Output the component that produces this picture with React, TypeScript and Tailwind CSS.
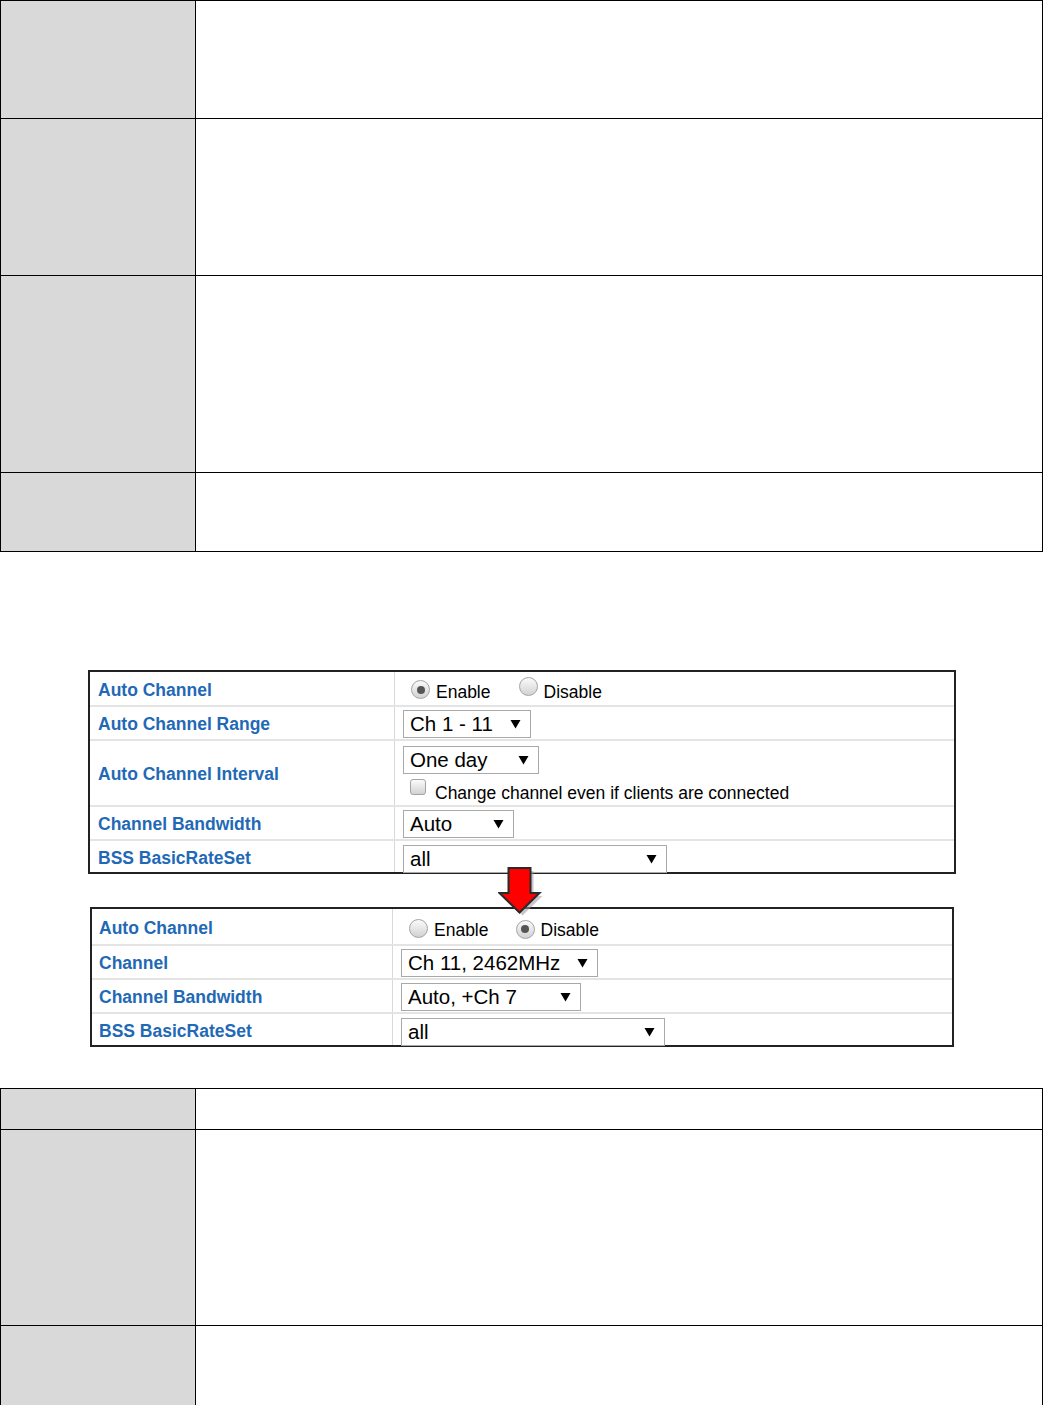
import React from "react";

function Caret() {
  return (
    <svg width="11" height="10" viewBox="0 0 11 10" className="shrink-0">
      <polygon points="0.5,1 10.5,1 5.5,9.5" fill="#000" />
    </svg>
  );
}

function Select({ text, w }: { text: string; w: string }) {
  return (
    <div
      className={`${w} flex h-[28px] items-center justify-between border border-[#a9a9a9] bg-white pl-[6px] pr-[9px] text-[20.5px] leading-none text-black`}
    >
      <span className="pt-[1px]">{text}</span>
      <Caret />
    </div>
  );
}

function Radio({ checked }: { checked?: boolean }) {
  return (
    <span className="inline-flex h-[19px] w-[19px] shrink-0 items-center justify-center rounded-full border border-[#a3a3a3] bg-linear-to-b from-[#fbfbfb] to-[#d2d2d2]">
      {checked && <span className="h-[8px] w-[8px] rounded-full bg-[#555555]" />}
    </span>
  );
}

function Checkbox() {
  return (
    <span className="inline-block h-[16px] w-[16px] shrink-0 rounded-[3px] border border-[#a3a3a3] bg-linear-to-b from-[#fbfbfb] to-[#d2d2d2]" />
  );
}

function PRow({
  label,
  h,
  labelW,
  labelPl,
  last,
  children,
}: {
  label: string;
  h: string;
  labelW: string;
  labelPl: string;
  last?: boolean;
  children: React.ReactNode;
}) {
  return (
    <div className={`flex ${h} ${last ? "" : "border-b-2 border-[#e4e4e4]"}`}>
      <div
        className={`${labelW} ${labelPl} flex shrink-0 items-center border-r border-[#d9d9d9] pt-[3px] text-[17.5px] font-bold text-[#1f69b6]`}
      >
        {label}
      </div>
      <div className="flex flex-1 flex-col justify-center pl-[8px] pt-[2px]">{children}</div>
    </div>
  );
}

function DocRow({ h, last }: { h: string; last?: boolean }) {
  return (
    <div className={`flex ${h} ${last ? "" : "border-b border-black"}`}>
      <div className="w-[195px] shrink-0 border-r border-black bg-[#d9d9d9]" />
      <div className="flex-1 bg-white" />
    </div>
  );
}

export default function App() {
  return (
    <div className="w-[1043px] bg-white font-['Liberation_Sans',Arial,sans-serif] text-black">
      {/* top doc table */}
      <div className="border border-black">
        <DocRow h="h-[118px]" />
        <DocRow h="h-[157px]" />
        <DocRow h="h-[197px]" />
        <DocRow h="h-[78px]" last />
      </div>

      {/* screenshots */}
      <div className="relative mt-[118px]">
        <div className="ml-[88px] w-[868px] border-2 border-[#222222] bg-white">
          <PRow label="Auto Channel" h="h-[35px]" labelW="w-[305px]" labelPl="pl-[8px]">
            <div className="flex items-center pl-[8px]">
              <Radio checked />
              <span className="ml-[6px] mt-[6px] text-[17.5px] leading-none">Enable</span>
              <span className="ml-[28px]">
                <Radio />
              </span>
              <span className="ml-[6px] mt-[6px] text-[17.5px] leading-none">Disable</span>
            </div>
          </PRow>
          <PRow label="Auto Channel Range" h="h-[34px]" labelW="w-[305px]" labelPl="pl-[8px]">
            <Select text="Ch 1 - 11" w="w-[128px]" />
          </PRow>
          <PRow label="Auto Channel Interval" h="h-[66px]" labelW="w-[305px]" labelPl="pl-[8px]">
            <div className="flex flex-col">
              <Select text="One day" w="w-[136px]" />
              <div className="mt-[5px] flex items-start pl-[7px]">
                <Checkbox />
                <span className="ml-[9px] mt-[6px] text-[17.5px] leading-none">
                  Change channel even if clients are connected
                </span>
              </div>
            </div>
          </PRow>
          <PRow label="Channel Bandwidth" h="h-[34px]" labelW="w-[305px]" labelPl="pl-[8px]">
            <Select text="Auto" w="w-[111px]" />
          </PRow>
          <PRow label="BSS BasicRateSet" h="h-[31px]" labelW="w-[305px]" labelPl="pl-[8px]" last>
            <div className="mt-[2px]">
              <Select text="all" w="w-[264px]" />
            </div>
          </PRow>
        </div>

        <div className="ml-[90px] mt-[33px] w-[864px] border-2 border-[#222222] bg-white">
          <PRow label="Auto Channel" h="h-[37px]" labelW="w-[301px]" labelPl="pl-[7px]">
            <div className="flex items-center pl-[8px] pt-[1px]">
              <Radio />
              <span className="ml-[6px] mt-[6px] text-[17.5px] leading-none">Enable</span>
              <span className="ml-[27px]">
                <Radio checked />
              </span>
              <span className="ml-[6px] mt-[6px] text-[17.5px] leading-none">Disable</span>
            </div>
          </PRow>
          <PRow label="Channel" h="h-[34px]" labelW="w-[301px]" labelPl="pl-[7px]">
            <Select text="Ch 11, 2462MHz" w="w-[197px]" />
          </PRow>
          <PRow label="Channel Bandwidth" h="h-[34px]" labelW="w-[301px]" labelPl="pl-[7px]">
            <Select text="Auto, +Ch 7" w="w-[180px]" />
          </PRow>
          <PRow label="BSS BasicRateSet" h="h-[31px]" labelW="w-[301px]" labelPl="pl-[7px]" last>
            <div className="mt-[2px]">
              <Select text="all" w="w-[264px]" />
            </div>
          </PRow>
        </div>

        {/* red arrow */}
        <svg
          className="absolute left-[498px] top-[197px]"
          width="48"
          height="52"
          viewBox="0 0 48 52"
        >
          <polygon
            points="13.5,4 35.5,4 35.5,29 44.5,29 24.5,48.5 4.5,29 13.5,29"
            fill="#9a9a9a"
            opacity="0.55"
          />
          <polygon
            points="10.5,1 32.5,1 32.5,26 41.5,26 21.5,45.5 1.5,26 10.5,26"
            fill="#ff0000"
            stroke="#2a2a2a"
            strokeWidth="2"
            strokeLinejoin="miter"
          />
        </svg>
      </div>

      {/* bottom doc table */}
      <div className="mt-[41px] border border-b-0 border-black">
        <DocRow h="h-[41px]" />
        <DocRow h="h-[196px]" />
        <DocRow h="h-[100px]" last />
      </div>
    </div>
  );
}
